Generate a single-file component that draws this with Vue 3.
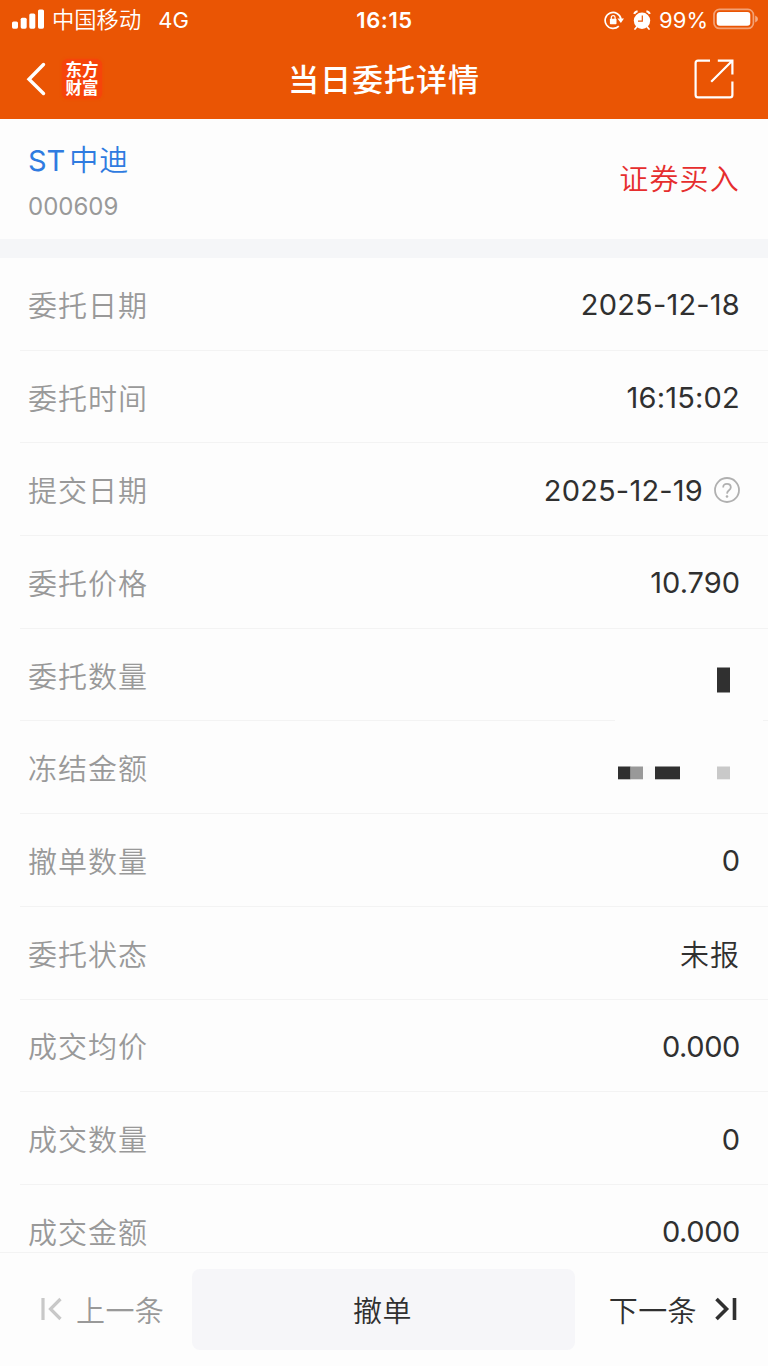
<template>
  <div class="page">
    <header class="top">
      <!-- System status bar -->
      <div class="status">
        <div class="status-left">
          <svg class="signal" width="32" height="20" viewBox="0 0 32 20" fill="#fff">
            <rect x="0" y="12.5" width="6" height="7.2" rx="1.6" />
            <rect x="8.7" y="8.7" width="6" height="11" rx="1.6" />
            <rect x="17.3" y="4.5" width="6" height="15.2" rx="1.6" />
            <rect x="26" y="0.4" width="6" height="19.3" rx="1.6" />
          </svg>
          <span class="carrier">中国移动</span>
          <span class="network">4G</span>
        </div>
        <span class="clock">16:15</span>
        <div class="status-right">
          <svg class="lock" width="20" height="20" viewBox="0 0 20 20" fill="none" stroke="#fff">
            <path d="M14.8 16.1A8 8 0 1 1 17 9" stroke-width="1.7" />
            <path d="M13.4 8.5h6.6l-3.1 4.6z" fill="#fff" stroke="none" />
            <rect x="5.9" y="8.8" width="6.6" height="5.4" rx="0.7" fill="#fff" stroke="none" />
            <path d="M7.3 9V7.5a1.9 1.9 0 0 1 3.8 0V9" stroke-width="1.2" />
          </svg>
          <svg class="alarm" width="18" height="20" viewBox="0 0 18 20" fill="none" stroke="#fff">
            <circle cx="9" cy="10.8" r="8.2" fill="#fff" stroke="none" />
            <path d="M1.3 4Q1.8 1.8 4.6 1.3M13.4 1.3Q16.2 1.8 16.7 4" stroke-width="2" />
            <path d="M3.8 16.8L2 19M14.2 16.8L16 19" stroke-width="1.7" stroke-linecap="round" />
            <path d="M9.3 5.5v5.6H5" stroke="#ea5504" stroke-width="1.2" />
          </svg>
          <span class="percent">99%</span>
          <svg class="battery" width="46" height="22" viewBox="0 0 46 22">
            <rect x="1" y="1.4" width="39.4" height="19" rx="5.5" fill="none" stroke="#fff" stroke-opacity="0.45" stroke-width="1.7" />
            <rect x="3.7" y="4" width="33.6" height="13.8" rx="3" fill="#fff" />
            <path d="M42.2 7.4q2.8 1 2.8 3.5t-2.8 3.5z" fill="#fff" fill-opacity="0.5" />
          </svg>
        </div>
      </div>

      <!-- Title bar -->
      <div class="nav">
        <div class="nav-left">
          <svg class="back" width="20" height="34" viewBox="0 0 20 34" fill="none" stroke="#fff" stroke-width="3.4" stroke-linecap="round">
            <path d="M17.5 2.5L3 17.2L17.5 31.5" />
          </svg>
          <div class="logo"><span>东方</span><span>财富</span></div>
        </div>
        <h1 class="title">当日委托详情</h1>
        <svg class="share" width="40" height="40" viewBox="0 0 40 40" fill="none" stroke="#fff" stroke-width="2.2">
          <path d="M16 1.6H4Q1.6 1.6 1.6 4V36Q1.6 38.4 4 38.4H36Q38.4 38.4 38.4 36V22.5" />
          <path d="M23.8 1.6H38.4V15.6M38 2L17.2 22.8" />
        </svg>
      </div>
    </header>

    <section class="stock">
      <div class="stock-info">
        <span class="stock-name">ST<span class="stock-cn">中迪</span></span>
        <span class="stock-code">000609</span>
      </div>
      <span class="direction">证券买入</span>
    </section>

    <main class="list">
      <div v-for="row in rows" :key="row.label" class="row" :class="row.mask && 'row-' + row.mask">
        <span class="label">{{ row.label }}</span>
        <!-- Pixelated values -->
        <svg v-if="row.mask === 'qty'" class="mask" width="136" height="26" viewBox="0 0 136 26">
          <rect x="113" y="0.5" width="13" height="25" fill="#303030" />
        </svg>
        <svg v-else-if="row.mask === 'amount'" class="mask" width="136" height="26" viewBox="0 0 136 26">
          <rect x="14" y="7.5" width="12.6" height="12.8" fill="#303030" />
          <rect x="26.6" y="7.5" width="12.4" height="12.8" fill="#999" />
          <rect x="39" y="7.5" width="12" height="12.8" fill="#fafafa" />
          <rect x="51" y="7.5" width="25" height="12.8" fill="#303030" />
          <rect x="113" y="7.5" width="13" height="12.8" fill="#c9c9c9" />
        </svg>
        <span v-else class="value" :class="row.kind">{{ row.value }}</span>
        <svg v-if="row.help" class="help" width="26" height="26" viewBox="0 0 26 26" fill="none" stroke="#b0b0b0">
          <circle cx="13" cy="13" r="12" stroke-width="1.8" />
          <path d="M9.2 10.4Q9.2 6.8 13 6.8T16.8 10.2Q16.8 11.8 15 13.2T13 16.6" stroke-width="1.8" />
          <circle cx="13" cy="19.5" r="1.3" fill="#b0b0b0" stroke="none" />
        </svg>
      </div>
    </main>

    <footer class="bottom">
      <div class="prev">
        <svg width="22" height="24" viewBox="0 0 22 24" fill="none" stroke="#c8c8c8" stroke-width="3.2">
          <path d="M3 1V23M20.5 2L10.5 12L20.5 22" />
        </svg>
        <span>上一条</span>
      </div>
      <button class="cancel">撤单</button>
      <div class="next">
        <span>下一条</span>
        <svg width="22" height="24" viewBox="0 0 22 24" fill="none" stroke="#303030" stroke-width="3.6">
          <path d="M19.5 1V23M1.5 2L11.5 12L1.5 22" />
        </svg>
      </div>
    </footer>
  </div>
</template>

<script setup>
const rows = [
  { label: '委托日期', value: '2025-12-18', kind: 'date' },
  { label: '委托时间', value: '16:15:02', kind: 'date' },
  { label: '提交日期', value: '2025-12-19', kind: 'date', help: true },
  { label: '委托价格', value: '10.790' },
  { label: '委托数量', mask: 'qty' },
  { label: '冻结金额', mask: 'amount' },
  { label: '撤单数量', value: '0' },
  { label: '委托状态', value: '未报', kind: 'cjk' },
  { label: '成交均价', value: '0.000', kind: 'amount' },
  { label: '成交数量', value: '0' },
  { label: '成交金额', value: '0.000', kind: 'amount' },
]
</script>

<style>
body {
  margin: 0;
}
</style>

<style scoped>
.page {
  display: flex;
  flex-direction: column;
  width: 768px;
  height: 1366px;
  overflow: hidden;
  background: #fdfdfd;
  color: #303030;
  font-family: Inter, "Noto Sans CJK SC", sans-serif;
  font-size: 29px;
}

svg {
  display: block;
  flex: none;
}

.top {
  flex: none;
  height: 119px;
  background: #ea5504;
  color: #fff;
}

/* Status bar */
.status {
  display: grid;
  grid-template-columns: 1fr auto 1fr;
  align-items: center;
  height: 40px;
  padding: 0 9px 0 12px;
  font-size: 22px;
  line-height: 40px;
}
.status-left,
.status-right {
  display: flex;
  align-items: center;
}
.status-right {
  justify-content: flex-end;
}
.signal {
  margin-top: -2px;
}
.carrier {
  margin-left: 8px;
  font-size: 22.3px;
  font-weight: 350;
}
.network {
  margin-left: 17px;
}
.clock {
  font-weight: 600;
  letter-spacing: 0.6px;
  transform: translateX(-1px);
}
.lock {
  margin-right: 9px;
}
.alarm {
  margin: -1px 8px 0 0;
}
.percent {
  margin-right: 5px;
}
.battery {
  margin-top: -2px;
}

/* Title bar */
.nav {
  display: grid;
  grid-template-columns: 1fr auto 1fr;
  align-items: center;
  height: 78px;
  padding: 0 34px 0 26px;
}
.nav-left {
  display: flex;
  align-items: center;
}
.back {
  margin-top: -1px;
}
.logo {
  display: flex;
  flex-direction: column;
  align-items: center;
  justify-content: center;
  width: 40px;
  height: 40px;
  margin-left: 16px;
  border-radius: 6px;
  background: #f6440a;
  box-shadow: 0 0 3px #f6440a;
  font-size: 16.5px;
  font-weight: 700;
  line-height: 18.5px;
}
.title {
  margin: 1px 0 0 8px;
  font-size: 31px;
  font-weight: 500;
  letter-spacing: 1px;
  line-height: 60px;
}
.share {
  justify-self: end;
}

/* Stock summary */
.stock {
  display: flex;
  flex: none;
  align-items: center;
  justify-content: space-between;
  box-sizing: border-box;
  height: 139px;
  padding: 0 28px;
  border-bottom: 19px solid #f5f6f8;
}
.stock-info {
  display: flex;
  flex-direction: column;
  padding-top: 11px;
}
.stock-name {
  color: #2f7be0;
  line-height: 44px;
}
.stock-cn {
  margin-left: 4px;
  font-weight: 350;
  letter-spacing: 1px;
}
.stock-code {
  margin-top: 1px;
  color: #999;
  font-size: 24px;
  line-height: 46px;
}
.direction {
  padding-bottom: 4px;
  color: #e62e2e;
  font-weight: 350;
  letter-spacing: 1.2px;
}

/* Detail rows */
.list {
  flex: none;
  height: 994px;
  overflow: hidden;
}
.row {
  display: flex;
  align-items: center;
  box-sizing: border-box;
  height: 92.7px;
  margin-left: 20px;
  padding: 0 28px 0 8px;
  border-bottom: 1px solid #f3f3f3;
}
/* The divider breaks off under the hidden quantity */
.row-qty {
  border-image: linear-gradient(to right, #f3f3f3 594px, transparent 594px, transparent 742px, #f3f3f3 742px) 1;
}
.label {
  margin-right: auto;
  color: #999;
  font-weight: 350;
  letter-spacing: 1px;
}
.value {
  padding-top: 2px;
  white-space: nowrap;
}
.value.date {
  letter-spacing: 0.2px;
}
.value.amount {
  letter-spacing: -0.4px;
}
.value.cjk {
  padding-top: 0;
  font-weight: 350;
  letter-spacing: 1px;
}
.mask {
  margin-top: 10px;
}
.help {
  margin-top: 2px;
  margin-left: 11px;
}

/* Bottom actions */
.bottom {
  display: grid;
  flex: 1;
  grid-template-columns: 152px 383px 1fr;
  align-items: center;
  padding: 0 31px 0 40px;
  border-top: 1px solid #f3f3f3;
  font-weight: 350;
  letter-spacing: 0.4px;
}
.prev,
.next {
  display: flex;
  align-items: center;
  margin-top: -2px;
}
.prev {
  gap: 14px;
  color: #999;
}
.next {
  justify-content: flex-end;
  gap: 18px;
}
.cancel {
  height: 81px;
  padding: 0 2px 2px 0;
  border: 0;
  border-radius: 8px;
  background: #f6f6f9;
  color: inherit;
  font: inherit;
  letter-spacing: inherit;
}
</style>
